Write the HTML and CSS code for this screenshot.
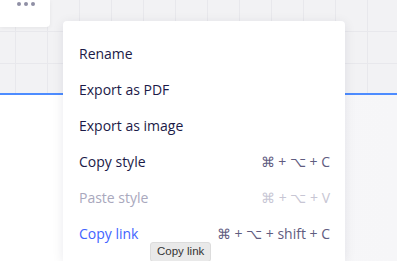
FILE: index.html
```html
<!DOCTYPE html>
<html lang="en">
<head>
  <meta charset="UTF-8">
  <meta name="viewport" content="width=device-width, initial-scale=1.0">
  <title>Board menu</title>
  <link rel="stylesheet" href="styles.css">
</head>
<body>
  <div class="canvas">
    <div class="toolbar">
      <span class="dots"><i></i><i></i><i></i></span>
    </div>
    <div class="frame"></div>

    <div class="menu">
      <div class="item">Rename</div>
      <div class="item">Export as PDF</div>
      <div class="item">Export as image</div>
      <div class="item">Copy style <span class="keys">⌘ + ⌥ + C</span></div>
      <div class="item disabled">Paste style <span class="keys">⌘ + ⌥ + V</span></div>
      <div class="item active">Copy link <span class="keys">⌘ + ⌥ + shift + C</span></div>
    </div>

    <div class="tooltip">Copy link</div>
  </div>
</body>
</html>
```

FILE: styles.css
```css
* {
  box-sizing: border-box;
}

html,
body {
  margin: 0;
  padding: 0;
  width: 397px;
  height: 261px;
  overflow: hidden;
}

body {
  font-family: "Open Sans", "Noto Sans", sans-serif;
  background: #f3f3f5;
}

.canvas {
  position: relative;
  width: 397px;
  height: 261px;
  overflow: hidden;
  display: flex;
  flex-direction: column;
  background-color: #f2f2f4;
  background-image:
    linear-gradient(to right, #e8e8ec 1px, transparent 1px),
    linear-gradient(to bottom, #e8e8ec 1px, transparent 1px);
  background-size: 32px 32px;
  background-position: 15px -1px;
}

.toolbar {
  width: 50px;
  height: 27px;
  background: #fff;
  border-bottom-right-radius: 4px;
  box-shadow: 0 1px 4px rgba(0, 0, 0, 0.06);
  display: flex;
  justify-content: center;
  padding-top: 2px;
  padding-left: 1px;
}

.dots {
  display: flex;
  gap: 3px;
  height: 4px;
}

.dots i {
  width: 4px;
  height: 4px;
  border-radius: 50%;
  background: #8f8fa5;
}

.frame {
  margin-top: 66px;
  flex: 1;
  border-top: 2px solid #4d8cff;
  background: linear-gradient(to right, #ffffff 20%, #f7f7f9 60%, #f6f6f8);
}

.menu {
  position: absolute;
  left: 63px;
  top: 21px;
  width: 282px;
  height: 240px;
  background: #fff;
  border-radius: 4px 4px 0 0;
  box-shadow: 0 2px 12px rgba(5, 0, 56, 0.09);
  padding: 14px 15px 0 16px;
}

.item {
  height: 36px;
  display: flex;
  align-items: center;
  justify-content: space-between;
  font-size: 14px;
  color: #1b1a47;
}

.keys {
  color: #5f5c80;
  font-size: 14px;
}

.item.disabled {
  color: #a9a8bd;
}

.item.disabled .keys {
  color: #c7c6d4;
}

.item.active {
  color: #4264ff;
}

.tooltip {
  position: absolute;
  left: 150px;
  top: 242px;
  padding: 2px 6px 4px;
  background: #e9e9e9;
  border: 1px solid #dcdcdc;
  border-radius: 3px;
  font-family: "Liberation Sans", sans-serif;
  font-size: 11.5px;
  color: #333;
}
```
